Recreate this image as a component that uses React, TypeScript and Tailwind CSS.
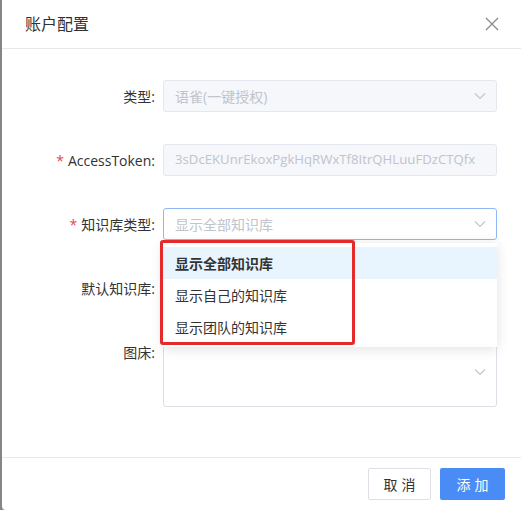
import React from "react";

const font = { fontFamily: '"Open Sans", "Noto Sans CJK SC", sans-serif' };

function Chevron({ color = "#c0c4cc" }: { color?: string }) {
  return (
    <svg width="12" height="8" viewBox="0 0 12 8" fill="none">
      <path d="M1 1.5 L6 6.5 L11 1.5" stroke={color} strokeWidth="1.1" />
    </svg>
  );
}

function Label({ text, required }: { text: string; required?: boolean }) {
  return (
    <div className="w-[161px] shrink-0 h-8 flex items-center justify-end pr-2 text-[14px] text-[#333]">
      {required && <span className="text-[#e5484d] mr-1">*</span>}
      <span>{text}:</span>
    </div>
  );
}

export default function App() {
  return (
    <div className="w-[521px] h-[510px] bg-[#868686] pl-[2px]" style={font}>
      <div className="w-full h-full bg-white rounded-bl-[4px] flex flex-col">
        {/* header */}
        <div className="h-[49px] border-b border-[#e8e8e8] flex items-center justify-between pl-[23px] pr-[22px]">
          <span className="text-[16px] text-[#303133]">账户配置</span>
          <svg width="14" height="14" viewBox="0 0 14 14">
            <path d="M1 1 L13 13 M13 1 L1 13" stroke="#8c8c8c" strokeWidth="1.3" />
          </svg>
        </div>
        {/* body */}
        <div className="flex-1 pt-[31px] pr-[24px] flex flex-col gap-8">
          <div className="flex">
            <Label text="类型" />
            <div className="flex-1 h-8 border border-[#e4e7ed] bg-[#f5f7fa] rounded-[3px] flex items-center justify-between pl-[11px] pr-[10px] text-[14px] text-[#c0c4cc]">
              <span>语雀(一键授权)</span>
              <Chevron />
            </div>
          </div>
          <div className="flex">
            <Label text="AccessToken" required />
            <div className="flex-1 h-8 border border-[#e4e7ed] bg-[#f5f7fa] rounded-[3px] flex items-center pl-[11px] text-[13.2px] text-[#c0c4cc]">
              <span>3sDcEKUnrEkoxPgkHqRWxTf8ItrQHLuuFDzCTQfx</span>
            </div>
          </div>
          <div className="flex">
            <Label text="知识库类型" required />
            <div className="flex-1 relative">
              <div className="h-8 border border-[#8fb8f6] bg-white rounded-[3px] flex items-center justify-between pl-[11px] pr-[10px] text-[14px] text-[#c0c4cc]">
                <span>显示全部知识库</span>
                <Chevron />
              </div>
              <div className="absolute left-0 right-0 top-[35px] z-10 bg-white py-1 shadow-[0_2px_12px_rgba(0,0,0,0.12)] text-[14px] text-[#333]">
                <div className="h-8 flex items-center px-3 bg-[#e8f4fe] font-bold">显示全部知识库</div>
                <div className="h-8 flex items-center px-3">显示自己的知识库</div>
                <div className="h-8 flex items-center px-3">显示团队的知识库</div>
              </div>
              <div className="absolute left-[-3px] top-[32px] w-[195px] h-[105px] border-[3px] border-[#e52a2a] rounded-[3px] z-20" />
            </div>
          </div>
          <div className="flex">
            <Label text="默认知识库" />
            <div className="flex-1 h-8 border border-[#dcdfe6] bg-white rounded-[3px] flex items-center justify-end pr-[10px]">
              <Chevron />
            </div>
          </div>
          <div className="flex">
            <Label text="图床" />
            <div className="flex-1 h-[71px] border border-[#dcdfe6] bg-white rounded-[3px] flex items-center justify-end pr-[10px]">
              <Chevron />
            </div>
          </div>
        </div>
        {/* footer */}
        <div className="border-t border-[#e8e8e8] h-[53px] flex items-start justify-end pt-[10px] pr-[16px] gap-[9px]">
          <div className="w-[63px] h-8 border border-[#dcdfe6] rounded-[2px] flex items-center justify-center text-[14px] text-[#333] tracking-[4px] pl-[4px]">
            取消
          </div>
          <div className="w-[65px] h-8 bg-[#4a8cf6] rounded-[2px] flex items-center justify-center text-[14px] text-white tracking-[4px] pl-[4px]">
            添加
          </div>
        </div>
      </div>
    </div>
  );
}
